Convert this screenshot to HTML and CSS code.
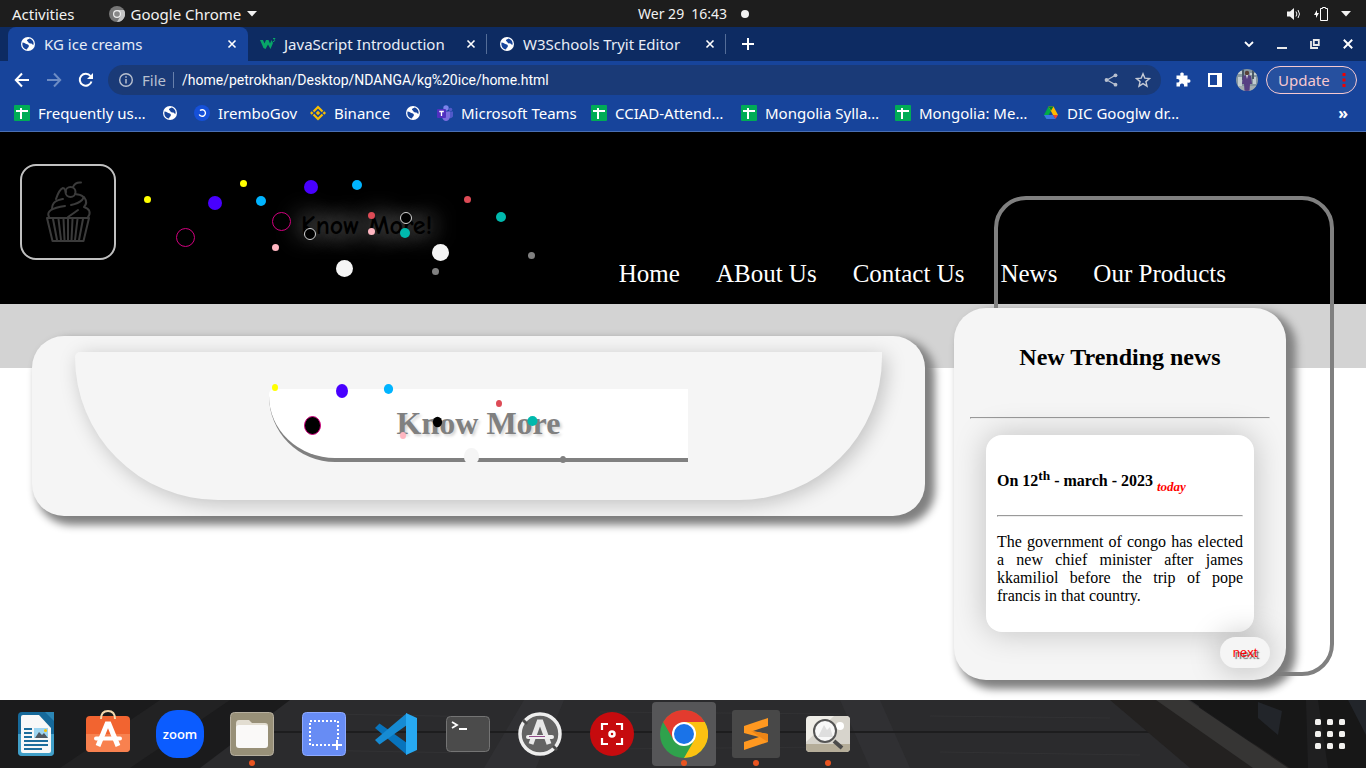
FILE: index.html
```html
<!DOCTYPE html>
<html lang="en">
<head>
<meta charset="utf-8">
<title>KG ice creams</title>
<link rel="stylesheet" href="styles.css">
</head>
<body>
<svg class="defs" aria-hidden="true">
  <defs>
    <symbol id="globe" viewBox="0 0 16 16"><circle cx="8" cy="8" r="7" fill="#fff"/><path d="M2.500 6.500C5 6.500 5 8 7 8.200c1.400.2 2 .8 1.800 2.200-.2 1.200-1.600 1.300-1.800 3.200C3.600 13.200 1.800 10 2.500 6.500ZM9.500 2.400c-.8 1-2.300.6-2.500 1.800-.2 1.200 1 .8 1.400 2 .3 1.200 1.800 1 2.900 1.300 1 .3 1 1.600 2.200 1.200C14.200 5.500 12 3 9.500 2.400Z" fill="#17449b"/></symbol>
    <symbol id="sheet" viewBox="0 0 16 16"><rect width="16" height="16" rx="1" fill="#00ac56"/><path d="M2 6h12M7 3v11" stroke="#fff" stroke-width="2"/></symbol>
    <symbol id="cross" viewBox="0 0 10 10"><path d="M1.500 1.500l7 7M8.500 1.500l-7 7" stroke="#fff" stroke-width="1.600"/></symbol>
  </defs>
</svg>

<div class="system-bar">
  <div class="system-left">
    <button>Activities</button>
    <button class="app-menu">
      <svg width="16" height="16" viewBox="0 0 16 16"><circle cx="8" cy="8" r="8" fill="#777"/><path d="M8 4h7a8 8 0 0 1-7 12l3.500-6Z" fill="#c4c4c4"/><circle cx="8" cy="8" r="4" fill="#eee"/><circle cx="8" cy="8" r="2.800" fill="#888"/></svg>
      Google Chrome
      <svg width="10" height="6" viewBox="0 0 10 6"><path d="M0 0h10L5 5.500Z" fill="#f2f2f2"/></svg>
    </button>
  </div>
  <button class="clock"><span>Wer 29</span><span>16:43</span><i></i></button>
  <div class="system-right">
    <svg width="15" height="14" viewBox="0 0 15 14"><path d="M0 4.500h3L7 1v12L3 9.500H0Z" fill="#f2f2f2"/><path d="M9 4.500q1.800 2.500 0 5M11 3q3 4 0 8" fill="none" stroke="#f2f2f2"/></svg>
    <svg width="15" height="16" viewBox="0 0 15 16"><path d="M3 4 0 9h2v3l3-5H3Z" fill="#fff"/><path d="M6.500 2.500h2v-1h3v1h2v12h-7Z" fill="none" stroke="#fff"/></svg>
    <svg width="10" height="6" viewBox="0 0 10 6"><path d="M0 0h10L5 5.500Z" fill="#f2f2f2"/></svg>
  </div>
</div>

<div class="browser">
  <div class="tabs">
    <div class="tab active"><svg width="16" height="16"><use href="#globe"/></svg><span>KG ice creams</span><button aria-label="Close tab"><svg width="10" height="10"><use href="#cross"/></svg></button></div>
    <div class="tab"><svg width="16" height="16" viewBox="0 0 16 16"><path d="M0 4h3l1.500 3.500L6 4h2.500L10 7.500 11.500 4 13 7l-2.500 6L8 8.500 5.500 13 3.500 12Z" fill="#08a568"/><path d="M13 2.500h2l-1 1.300q1.500.5 0 1.700h-1" fill="none" stroke="#08a568"/></svg><span>JavaScript Introduction</span><button aria-label="Close tab"><svg width="10" height="10"><use href="#cross"/></svg></button></div>
    <div class="tab"><svg width="16" height="16"><use href="#globe"/></svg><span>W3Schools Tryit Editor</span><button aria-label="Close tab"><svg width="10" height="10"><use href="#cross"/></svg></button></div>
    <button class="new-tab" aria-label="New tab"><svg width="12" height="12" viewBox="0 0 12 12"><path d="M6 0v12M0 6h12" stroke="#fff" stroke-width="2"/></svg></button>
    <div class="window-controls">
      <button aria-label="Search tabs"><svg width="12" height="12" viewBox="0 0 12 12"><path d="m2 4 4 4 4-4" fill="none" stroke="#fff" stroke-width="1.800"/></svg></button>
      <button aria-label="Minimize"><svg width="12" height="12" viewBox="0 0 12 12"><path d="M1 10h10" stroke="#e9e9e9" stroke-width="2"/></svg></button>
      <button aria-label="Restore"><svg width="12" height="12" viewBox="0 0 12 12"><path d="M4.800 2h5v5h-5ZM2 3v7h7" fill="none" stroke="#e9e9e9" stroke-width="1.800"/></svg></button>
      <button aria-label="Close"><svg width="12" height="12"><use href="#cross"/></svg></button>
    </div>
  </div>

  <div class="toolbar">
    <button aria-label="Back"><svg width="16" height="16" viewBox="0 0 16 16"><path d="M15 8H2M8 1.500 1.800 8 8 14.500" fill="none" stroke="#fff" stroke-width="2"/></svg></button>
    <button aria-label="Forward"><svg width="16" height="16" viewBox="0 0 16 16"><path d="M1 8h13M8 1.500 14.200 8 8 14.500" fill="none" stroke="#6d8cc4" stroke-width="2"/></svg></button>
    <button aria-label="Reload"><svg width="16" height="16" viewBox="0 0 16 16"><path d="M13.500 9.500A6 6 0 1 1 12.500 4" fill="none" stroke="#fff" stroke-width="2"/><path d="M15 1v6H9Z" fill="#fff"/></svg></button>
    <div class="address">
      <svg width="16" height="16" viewBox="0 0 16 16"><circle cx="8" cy="8" r="6.300" fill="none" stroke="#b8c0cf" stroke-width="1.400"/><path d="M8 7v4.500M8 4.300v1.500" stroke="#b8c0cf" stroke-width="1.500"/></svg>
      <label for="url">File</label>
      <input id="url" type="text" value="/home/petrokhan/Desktop/NDANGA/kg%20ice/home.html">
      <button aria-label="Share"><svg width="16" height="16" viewBox="0 0 16 16"><path d="M12 3.500 4 8l8 4.500" fill="none" stroke="#b8c0cf" stroke-width="1.300"/><g fill="#b8c0cf"><circle cx="12.500" cy="3.300" r="1.900"/><circle cx="3.500" cy="8" r="1.900"/><circle cx="12.500" cy="12.700" r="1.900"/></g></svg></button>
      <button aria-label="Bookmark"><svg width="16" height="16" viewBox="0 0 16 16"><path d="m8 1.800 1.800 4.300 4.700.4-3.600 3.100 1.100 4.600L8 11.700l-4 2.500 1.100-4.600-3.600-3.100 4.700-.4Z" fill="none" stroke="#c5cad5" stroke-width="1.400"/></svg></button>
    </div>
    <button aria-label="Extensions"><svg width="16" height="16" viewBox="0 0 16 16"><path d="M1.500 3.500h4q-1-3 1.500-3t1.500 3h4v4q3-1 3 1.500t-3 1.500v4H9q.5-3-2-3t-2 3H1.500v-4q3 .5 3-1.800t-3-1.700Z" fill="#fff"/></svg></button>
    <button aria-label="Side panel"><svg width="16" height="16" viewBox="0 0 16 16"><path d="M2 2h12v12H2Z" fill="none" stroke="#fff" stroke-width="2"/><path d="M10 2h4v12h-4Z" fill="#fff"/></svg></button>
    <button aria-label="Profile"><svg width="22" height="22" viewBox="0 0 22 22"><clipPath id="av"><circle cx="11" cy="11" r="11"/></clipPath><g clip-path="url(#av)"><path fill="#8797a0" d="M0 0h22v22H0z"/><path fill="#c3cdd0" d="M0 2h8v3H0zM14 4h8v2h-8zM2 8h4v9H2zM17 8h3v7h-3z"/><path fill="#495866" d="M6 0h2v11H6zM16 0h2v10h-2z"/><path fill="#a4adb0" d="M0 17h22v5H0z"/><path fill="#574083" d="M7 7q4-2 8 0l1 8h-2l-.5 7h-5L8 15H6Z"/><circle cx="11" cy="4" r="2.200" fill="#5a4038"/><path fill="#ddd" d="M10 6h2l-1 4z"/></g></svg></button>
    <button class="update">Update <svg width="4" height="14" viewBox="0 0 4 14"><path d="M.5 0h3v3h-3ZM.5 5.500h3v3h-3ZM.5 11h3v3h-3Z" fill="#f00000"/></svg></button>
  </div>

  <div class="bookmarks">
    <a href="#"><svg width="16" height="16"><use href="#sheet"/></svg>Frequently us…</a>
    <a href="#" aria-label="Bookmark"><svg width="16" height="16"><use href="#globe"/></svg></a>
    <a href="#"><svg width="16" height="16" viewBox="0 0 16 16"><circle cx="8" cy="8" r="8" fill="#1550d8"/><path d="M6 5.500A3.300 3.300 0 1 1 5.200 9.500" fill="none" stroke="#fff" stroke-width="1.400"/></svg>IremboGov</a>
    <a href="#"><svg width="16" height="16" viewBox="0 0 16 16"><path d="m3.500 6.500 4.500-4.500 4.500 4.500M3.500 9.500 8 14l4.500-4.500" fill="none" stroke="#f8be00" stroke-width="2.200"/><path d="m8 5.800 2.200 2.200L8 10.200 5.800 8ZM1.700 6.300 3.400 8 1.700 9.700 0 8ZM14.300 6.300 16 8l-1.700 1.700L12.600 8Z" fill="#f8be00"/></svg>Binance</a>
    <a href="#" aria-label="Bookmark"><svg width="16" height="16"><use href="#globe"/></svg></a>
    <a href="#"><svg width="16" height="16" viewBox="0 0 16 16"><circle cx="13.500" cy="4.500" r="1.800" fill="#5059c9"/><path d="M11 6.500h5v5q-2 3-5 1Z" fill="#5059c9"/><circle cx="9" cy="3" r="2.700" fill="#7b83eb"/><path d="M5 6.500h8V12q-1 4-4 4t-4-4Z" fill="#7b6de0"/><rect y="4" width="9" height="9" rx="1" fill="#5030c0"/><path d="M2.300 6.500h4.500M4.500 6.500V11" stroke="#fff" stroke-width="1.300"/></svg>Microsoft Teams</a>
    <a href="#"><svg width="16" height="16"><use href="#sheet"/></svg>CCIAD-Attend…</a>
    <a href="#"><svg width="16" height="16"><use href="#sheet"/></svg>Mongolia Sylla…</a>
    <a href="#"><svg width="16" height="16"><use href="#sheet"/></svg>Mongolia: Me…</a>
    <a href="#"><svg width="16" height="16" viewBox="0 0 16 16"><path d="M5.500 1.500 8 5.800 3.500 14 1 10Z" fill="#00ac47"/><path d="M5.500 1.500h5L15 10h-5Z" fill="#ffba00"/><path d="M5.500 1.500h5L8 5.800Z" fill="#00832d"/><path d="M3.500 10H10l2.500 4h-9L1 10Z" fill="#3777e3"/><path d="M10 10h5l-2.500 4Z" fill="#ea4335"/></svg>DIC Googlw dr…</a>
    <button class="more">»</button>
  </div>
</div>

<div class="page">
  <header class="site-header">
    <a class="logo" href="#" aria-label="KG ice creams"><svg width="64" height="64" viewBox="0 0 64 64" fill="none" stroke="#3b3b3b" stroke-width="2" stroke-linecap="round" stroke-linejoin="round"><path d="M11 38h42l-5.500 23h-31Z"/><path d="M17 39l4 21M22.500 39l2.500 21M27.500 39l1 21M32 39v21M36.500 39l-1 21M41.500 39 39 60M47 39l-4 21"/><path d="M13 37c-3-6 3-9 16-11M16 29c0-8 6-9 11-10M20 19c2-6 4-10 7-11 2 0 2 2 3 4M39 14c8 1 10 3 7 6-2 2-6 4-11 5M48 17c3 4 3 7 0 10 6 2 7 6 4 10M42 30q-4 3-10 7"/><circle cx="34.500" cy="12" r="5"/><path d="M37 7q2-5 8-4.500"/></svg></a>
    <div class="brand">
      <h1>Know More!</h1>
      <svg class="confetti" width="420" height="120" viewBox="132 164 420 120">
        <g id="sprinkles">
          <circle cx="147.500" cy="199.500" r="3.500" fill="#ff0"/><circle cx="215" cy="203" r="7" fill="#4800ff"/><circle cx="261" cy="201" r="5" fill="#00b4ff"/><circle cx="185.500" cy="237.500" r="9" fill="#000" stroke="#d1017f"/><circle cx="275.500" cy="247.500" r="3.500" fill="#ffb6c1"/><circle cx="310" cy="234" r="5.500" fill="#000" stroke="#d3d3d3"/><circle cx="371.500" cy="215.500" r="3.500" fill="#dd4b56"/><circle cx="405" cy="233" r="5" fill="#00b9ad"/><circle cx="344.500" cy="268.500" r="8.500" fill="#f5f5f5"/><circle cx="435.500" cy="271.500" r="3.500" fill="#808080"/>
        </g>
        <use href="#sprinkles" x="96" y="-16"/>
      </svg>
    </div>
    <nav><a href="#">Home</a><a href="#">ABout Us</a><a href="#">Contact Us</a><a href="#">News</a><a href="#">Our Products</a></nav>
  </header>

  <main>
    <section class="card hero">
      <div class="bowl">
        <div class="banner">
          <h2>Know More</h2>
          <svg class="confetti" width="310" height="90" viewBox="269 381 310 90">
            <ellipse cx="275" cy="387.500" rx="3" ry="3.500" fill="#ff0"/><ellipse cx="342" cy="391" rx="6" ry="7" fill="#4800ff"/><ellipse cx="388.500" cy="389" rx="4.600" ry="5" fill="#00b4ff"/><ellipse cx="312.500" cy="425.500" rx="8" ry="9" fill="#000" stroke="#d1017f"/><ellipse cx="403" cy="435.500" rx="3" ry="3.500" fill="#ffb6c1"/><ellipse cx="437.500" cy="422" rx="4.600" ry="5.300" fill="#000"/><ellipse cx="499" cy="403.500" rx="3" ry="3.500" fill="#dd4b56"/><ellipse cx="532.500" cy="421" rx="5" ry="5" fill="#00b9ad"/><ellipse cx="471.500" cy="456.500" rx="7.600" ry="8.500" fill="#f5f5f5"/><ellipse cx="563" cy="459.500" rx="3" ry="3.500" fill="#808080"/>
          </svg>
        </div>
      </div>
    </section>
    <div class="news-area">
      <div class="frame"></div>
      <aside class="card news">
        <h2>New Trending news</h2>
        <hr>
        <article>
          <h4>On 12<sup>th</sup> - march - 2023 <sub>today</sub></h4>
          <hr>
          <p>The government of congo has elected a new chief minister after james kkamiliol before the trip of pope francis in that country.</p>
        </article>
        <button class="next">next</button>
      </aside>
    </div>
  </main>
</div>

<div class="dock">
  <svg class="wood" viewBox="0 0 1366 68" preserveAspectRatio="none"><path fill="#1b1b1c" d="M0 0h1366v68H0z"/><path fill="#2b2b2d" d="M290 0h910L1190 68H200Z"/><path fill="#222223" d="m60 68 100-68h70L130 68Z"/><path fill="#303033" d="m484 68 40-68h40l-28 68ZM840 0h40l30 68h-40Z"/><path stroke="#1d1d1e" stroke-width="2" d="M250 32h910"/><path stroke="#323234" d="M330 14l160 3M600 12l240 2M930 16l180 2M300 50l170 3M610 49l220-2M940 52l200 3"/><path fill="#232120" d="M1110 0h60l130 68h-110Z"/><path fill="#363534" d="M1156 0h32l100 68h-35Z"/><path fill="#171717" d="M1190 0h176v68h-76Z"/><path fill="#22252a" d="m1258 2 24 9-4 24-20-17ZM1348 0h18v35Z"/><path fill="#1f1f20" d="M1306 0h12l10 68h-20Z"/></svg>
  <div class="launchers">
    <button aria-label="Writer"><svg width="48" height="48" viewBox="0 0 48 48"><rect x="6" y="2" width="36" height="44" rx="4" fill="#16699a"/><path fill="#419fc8" d="M6 24h36v18q0 4-4 4H10q-4 0-4-4Z"/><path d="M9 7q0-2 2-2h16l12 13v23q0 2-2 2H11q-2 0-2-2Z" fill="#f8f8f8"/><path d="M33 2h9v9Z" fill="#2b86b5"/><path d="M12 19h8M12 23h8M12 27h8M12 31h24M12 35h24M12 39h18" stroke="#1d6d9c" stroke-width="2"/><path fill="#9dd5f1" d="M22 18h14v10H22z"/><path fill="#4f5963" d="m23 28 4-6 3 3 2-2 4 5Z"/><circle cx="33.500" cy="20.500" r="1.500" fill="#f8c000"/></svg></button>
    <button aria-label="Software"><svg width="48" height="48" viewBox="0 0 48 48"><rect x="2" y="6" width="44" height="36" rx="4" fill="#f26430"/><path fill="#f8814f" d="M2 24h44v14q0 4-4 4H6q-4 0-4-4Z"/><path d="M17 9q0-8 7-8t7 8" fill="none" stroke="#f5d9ae" stroke-width="2"/><path d="m14 36 9-22h2l9 22" fill="none" stroke="#fff" stroke-width="5"/><path d="M12 28.500h24" stroke="#fff" stroke-width="4" stroke-linecap="round"/></svg></button>
    <button class="zoom-app"><span>zoom</span></button>
    <button class="running" aria-label="Files"><svg width="48" height="48" viewBox="0 0 48 48"><rect x="2.500" y="2.500" width="43" height="43" rx="4" fill="#989078" stroke="#b6af9f"/><path d="M8 14q0-4 3-4h10l3 3h13q3 0 3 3v5H8Z" fill="#e2ddd1"/><rect x="8" y="15" width="32" height="23" rx="3" fill="#faf9f8"/></svg></button>
    <button aria-label="Screenshot"><svg width="48" height="48" viewBox="0 0 48 48"><rect x="2.500" y="2.500" width="43" height="43" rx="4" fill="#678cf4" stroke="#8eaaff"/><path d="M10 11h28v24H10Z" fill="none" stroke="#fff" stroke-width="2" stroke-dasharray="2 2"/><path fill="#678cf4" d="M32 29h12v12H32z"/><path d="M37 30v10M32 35h10" stroke="#fff" stroke-width="2"/></svg></button>
    <button aria-label="VS Code"><svg width="48" height="48" viewBox="0 0 48 48"><path d="m3 18 4.500-4.500L35 33v12Z" fill="#0874bd"/><path d="m3 30 4.500 4.500L35 15V3Z" fill="#168bd3"/><path d="m34 3 11 5v32l-11 5Z" fill="#27a9f2"/></svg></button>
    <button aria-label="Terminal"><svg width="48" height="48" viewBox="0 0 48 48"><rect x="2.500" y="6.500" width="43" height="35" rx="4" fill="#4b4b4b" stroke="#747474"/><path d="m8 12 5 3-5 3M15 19h8" fill="none" stroke="#fff" stroke-width="1.800"/></svg></button>
    <button aria-label="Updater"><svg width="48" height="48" viewBox="0 0 48 48"><circle cx="24" cy="24" r="20" fill="#636363" stroke="#eee" stroke-width="3.500"/><path d="m7 10 4 4M37 36l4 4" stroke="#4b4b4b" stroke-width="3"/><path d="m15 34 8-22h2l8 22" fill="none" stroke="#e8e8e8" stroke-width="5"/><path d="M12 27h24" stroke="#eee" stroke-width="4" stroke-linecap="round"/><path d="M13 26.500h16" stroke="#924d8b"/></svg></button>
    <button aria-label="Recorder"><svg width="48" height="48" viewBox="0 0 48 48"><circle cx="24" cy="24" r="22" fill="#c60b0e"/><path d="M14 20v-6h6M28 14h6v6M34 28v6h-6M20 34h-6v-6" fill="none" stroke="#fff" stroke-width="2.200"/><circle cx="24" cy="24" r="2.500" fill="none" stroke="#fff" stroke-width="2.500"/></svg></button>
    <button class="running focused" aria-label="Google Chrome"><svg width="48" height="48" viewBox="0 0 48 48"><circle cx="24" cy="24" r="24" fill="#2fa24c"/><path d="M3.200 12A24 24 0 0 1 44.800 12H24L13.600 30Z" fill="#e33b2e"/><path d="M24 12h20.800A24 24 0 0 1 24 48l10.400-18Z" fill="#fcc111"/><circle cx="24" cy="24" r="12" fill="#fff"/><circle cx="24" cy="24" r="10" fill="#1a73e8"/></svg></button>
    <button class="running" aria-label="Sublime Text"><svg width="48" height="48" viewBox="0 0 48 48"><rect width="48" height="48" rx="3" fill="#484848"/><path d="m12 16 24-8v8l-15 5 15 3v8l-24 8v-8l15-5-15-4Z" fill="#ff9820"/><path d="m19 21 17 3v8l-8-5Z" fill="#ed8516"/></svg></button>
    <button class="running" aria-label="Image viewer"><svg width="48" height="48" viewBox="0 0 48 48"><rect x="2" y="6" width="44" height="36" rx="4" fill="#efede7"/><path d="m2 32 28-26h12q4 0 4 4v24H2Z" fill="#d7d4cc"/><path d="M2 34h44v4q0 4-4 4H6q-4 0-4-4Z" fill="#b5ad99"/><circle cx="36" cy="16" r="4" fill="#fff"/><circle cx="21" cy="21" r="11" fill="#f8f8f8" stroke="#555" stroke-width="2"/><path d="m14 27 6-12 3 5 3-3 3 10Z" fill="#dedede"/><path d="m30 31 8 7" stroke="#4b4b4b" stroke-width="4"/></svg></button>
  </div>
  <button class="show-apps" aria-label="Show applications"><svg width="30" height="30" viewBox="0 0 30 30" fill="#f2f1ef"><g id="r"><rect width="6" height="6" rx="1.500"/><rect x="12" width="6" height="6" rx="1.500"/><rect x="24" width="6" height="6" rx="1.500"/></g><use href="#r" y="12"/><use href="#r" y="24"/></svg></button>
</div>
</body>
</html>
```
FILE: styles.css
```css
* { box-sizing: border-box; }
body {
  margin: 0;
  min-height: 100vh;
  display: flex;
  flex-direction: column;
  font-family: "Liberation Serif", serif;
  background: #fff;
}
button {
  padding: 0;
  border: 0;
  background: none;
  color: inherit;
  font: inherit;
}
svg { display: block; flex: none; }
a { color: inherit; text-decoration: none; }
.defs { position: absolute; width: 0; height: 0; }

.system-bar, .browser { font-family: "Noto Sans", sans-serif; font-size: 15px; line-height: 20px; }
.system-bar {
  display: grid;
  grid-template-columns: 1fr auto 1fr;
  align-items: center;
  height: 27px;
  padding: 0 15px 0 12px;
  background: #1d1d1d;
  color: #f2f2f2;
}
.system-left { display: flex; gap: 34px; }
.app-menu { display: flex; align-items: center; gap: 6px; }
.clock { display: flex; align-items: center; gap: 7px; margin-left: 24px; font-size: 14px; }
.clock i { width: 8px; height: 8px; margin-left: 7px; border-radius: 50%; background: #f2f2f2; }
.system-right { display: flex; align-items: center; justify-content: flex-end; gap: 12px; }

.browser { background: #17449b; color: #fff; border-bottom: 1px solid #4a6fb3; }
.tabs { display: flex; height: 34px; padding-left: 8px; background: #0d2b62; }
.tab {
  display: flex;
  align-items: center;
  gap: 8px;
  width: 239px;
  padding: 0 11px 1px 12px;
  position: relative;
  color: #e8edf6;
}
.tab span { flex: 1; white-space: nowrap; }
.tab.active { width: 240px; background: #17449b; border-radius: 8px 8px 0 0; }
.tab:not(.active)::after {
  content: "";
  position: absolute;
  right: 0;
  top: 7px;
  height: 20px;
  border-right: 1px solid #546d98;
}
.new-tab { margin-left: 16px; }
.window-controls { display: flex; align-items: center; gap: 21px; margin-left: auto; padding-right: 12px; }

.toolbar { display: flex; align-items: center; gap: 16px; height: 38px; padding: 0 9px 0 14px; }
.address {
  flex: 1;
  display: flex;
  align-items: center;
  gap: 8px;
  height: 30px;
  margin-left: -2px;
  margin-right: -2px;
  padding: 0 10px;
  border-radius: 15px;
  background: #1a3a77;
}
.address label { padding-right: 7px; line-height: 16px; color: #b8c0cf; border-right: 1px solid #6780ab; }
.address input {
  flex: 1;
  min-width: 0;
  padding: 0;
  border: 0;
  outline: 0;
  background: none;
  color: #fff;
  font: 14px Roboto, "Noto Sans", sans-serif;
}
.address button + button { margin-left: 8px; }
.toolbar > button[aria-label="Profile"] { margin-left: -3px; }
.toolbar .update {
  display: flex;
  align-items: center;
  justify-content: space-between;
  width: 91px;
  height: 28px;
  margin-left: -8px;
  padding: 0 10px 0 11px;
  border: 1px solid #f6c9d0;
  border-radius: 14px;
  background: #26509f;
  color: #f6c9d0;
}
.bookmarks {
  display: grid;
  grid-template-columns: 148px 32px 116px 95px 32px 154px 150px 154px 148px 1fr auto;
  align-items: center;
  height: 32px;
  padding: 0 18px 5px 14px;
}
.bookmarks a { display: flex; align-items: center; gap: 8px; white-space: nowrap; }
.more { font-size: 16px; font-weight: bold; }

.page { flex: 1; }
.site-header {
  display: flex;
  align-items: flex-start;
  gap: 16px;
  padding: 32px 140px 16px 20px;
  background: #000;
  color: #fff;
}
.logo {
  display: flex;
  align-items: center;
  justify-content: center;
  width: 96px;
  height: 96px;
  border: 2px solid #c0c0c0;
  border-radius: 16px;
}
.brand { position: relative; padding: 46px 0 0 169px; }
.brand h1 {
  margin: 0;
  font: bold 26px/32px "Comic Neue", "Comic Sans MS", "Open Sans", sans-serif;
  color: #000;
  white-space: nowrap;
  text-shadow: 0 0 24px #e0e0e0;
}
.brand .confetti { position: absolute; left: 0; top: 0; overflow: visible; }
nav { display: flex; gap: 36px; margin: 96px 0 0 auto; font-size: 25px; line-height: 28px; white-space: nowrap; }

main {
  display: flex;
  align-items: flex-start;
  gap: 29px;
  padding: 4px 80px 20px 32px;
  background: linear-gradient(#d3d3d3 64px, #fff 64px);
}
.card { border-radius: 32px; background: #f5f5f5; box-shadow: 7px 6px 8px 3px #808080; }
.hero { flex: 1; margin-top: 28px; padding: 16px 43px; }
.bowl {
  padding: 37px 24% 38px;
  border-radius: 5px 0 143px 143px;
  background: #f5f5f5;
  box-shadow: 4px 4px 20px rgba(0, 0, 0, 0.22);
}
.banner {
  position: relative;
  padding: 16px 0 17px;
  border-bottom: 4px solid #808080;
  border-radius: 5px 0 0 66px;
  background: #fff;
}
.banner h2 {
  margin: 0;
  font-size: 32px;
  line-height: 36px;
  text-align: center;
  color: #808080;
  text-shadow: 2px 2px 3px #d3d3d3;
}
.banner .confetti { position: absolute; left: 0; top: -8px; overflow: visible; }

.news-area { position: relative; flex: 0 0 332px; }
.frame { position: absolute; top: -112px; left: 40px; right: -48px; bottom: 4px; border: 4px solid #808080; border-radius: 32px; }
.news { position: relative; padding: 16px 16px 12px; }
.news > h2 { margin: 19px 0 46px; font-size: 24px; line-height: 28px; text-align: center; }
.news hr { margin: 0; }
article {
  margin: 16px 16px 5px;
  padding: 11px;
  border-radius: 16px;
  background: #fff;
  box-shadow: 0 0 32px rgba(0, 0, 0, 0.22);
}
article h4 { margin: 22px 0 20px; font-size: 16px; }
article sub { color: #f00; font-size: 13px; font-style: italic; }
article p { margin: 16px 0; font-size: 16px; line-height: 18px; text-align: justify; }
.next {
  display: block;
  width: 50px;
  height: 31px;
  margin-left: auto;
  border-radius: 16px;
  background: #f5f5f5;
  box-shadow: 0 0 32px rgba(0, 0, 0, 0.28);
  font: 13px "Liberation Sans", sans-serif;
  color: #f00;
  text-shadow: 2px 2px 1px #606060;
}

.dock {
  position: relative;
  display: flex;
  justify-content: space-between;
  height: 68px;
  padding: 0 21px 0 4px;
  background: #1f1f20;
}
.wood { position: absolute; left: 0; top: 0; width: 100%; height: 100%; }
.launchers { position: relative; display: flex; align-items: center; gap: 8px; }
.launchers button {
  position: relative;
  display: flex;
  align-items: center;
  justify-content: center;
  width: 64px;
  height: 64px;
  border-radius: 4px;
}
.launchers .focused { background: #565658; }
.running::after {
  content: "";
  position: absolute;
  left: 29px;
  bottom: 0;
  width: 6px;
  height: 6px;
  border-radius: 50%;
  background: #e95420;
}
.zoom-app span {
  display: flex;
  align-items: center;
  justify-content: center;
  width: 48px;
  height: 48px;
  border-radius: 21px;
  background: #0b5cff;
  color: #fff;
  font: 600 13px/20px "Open Sans", sans-serif;
}
.show-apps { position: relative; }
```
